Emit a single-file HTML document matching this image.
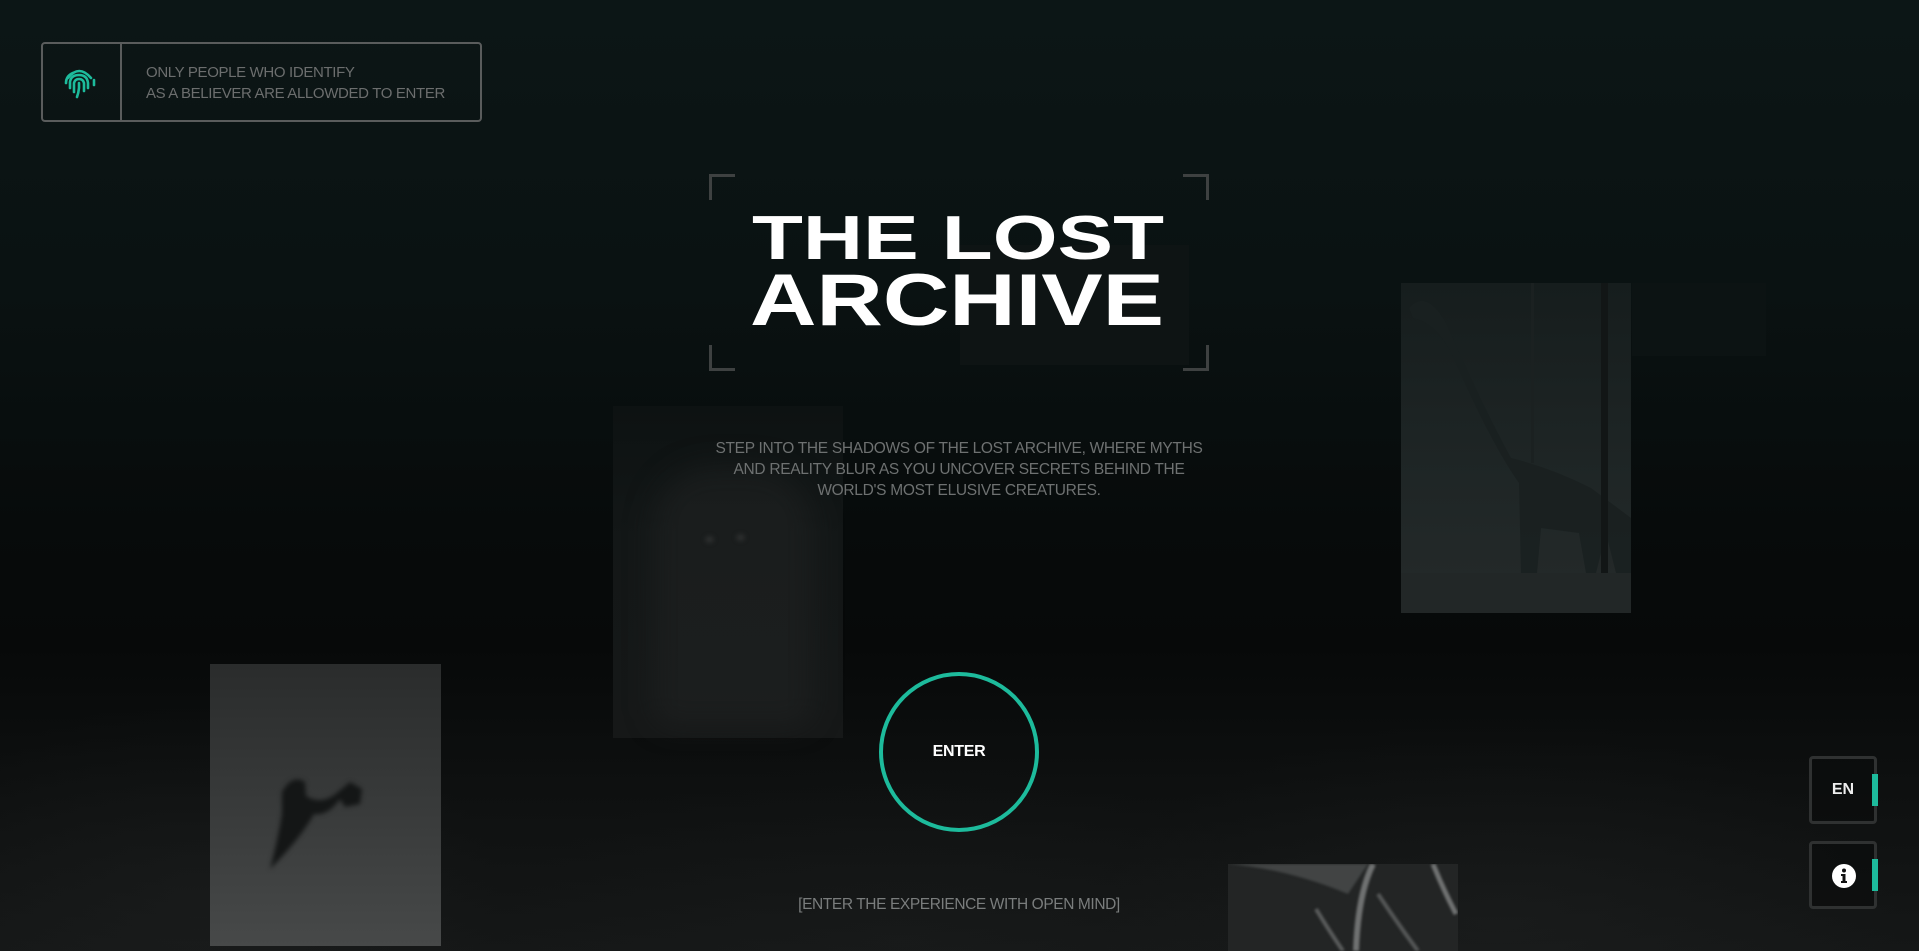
<!DOCTYPE html>
<html><head><meta charset="utf-8"><style>
*{margin:0;padding:0;box-sizing:border-box}
html,body{width:1919px;height:951px;overflow:hidden}
body{position:relative;font-family:"Liberation Sans",sans-serif;
background:linear-gradient(180deg,#0c1616 0%,#0a1212 30%,#070b0b 55%,#070909 68%,#0f1111 85%,#151717 100%);}
.abs{position:absolute}
.forest{left:0;top:600px;width:1919px;height:351px;
background:
radial-gradient(ellipse 300px 200px at 200px 300px,rgba(40,42,42,.25),transparent),
radial-gradient(ellipse 400px 200px at 1500px 320px,rgba(40,42,42,.25),transparent),
radial-gradient(ellipse 400px 180px at 900px 340px,rgba(35,37,37,.2),transparent);}
.notice{left:41px;top:42px;width:441px;height:80px;border:2px solid #5a5c5c;border-radius:4px}
.notice .div{position:absolute;left:77px;top:0;bottom:0;border-left:2px solid #5a5c5c}
.notice .t{position:absolute;left:103px;top:18px;color:#6c6e6e;font-size:15px;line-height:21px;letter-spacing:-.35px}
.desc{left:660px;top:438px;width:598px;text-align:center;color:#6e7171;font-size:15.5px;line-height:21px;letter-spacing:-.3px}
.img{position:absolute}
.enter{left:879px;top:672px;width:160px;height:160px;border:4px solid #1dbb9c;border-radius:50%;
color:#fff;font-weight:bold;font-size:16px;display:flex;align-items:center;justify-content:center;letter-spacing:-.3px}
.sub{left:700px;top:896px;width:518px;text-align:center;color:#7a7d7d;font-size:15.5px;letter-spacing:-.4px}
.btn{left:1809px;width:68px;height:68px;border:3px solid #2f3131;border-radius:4px;background:rgba(10,12,12,.6)}
.bar{position:absolute;right:-4px;top:15px;width:6px;height:32px;background:#1dbb9c}
.corner{position:absolute;width:26px;height:26px;border-color:#3e4141;border-style:solid;border-width:0}
</style></head><body>
<div class="abs forest"></div>

<!-- faint images -->
<div class="img" style="left:960px;top:245px;width:229px;height:120px;background:#0e1414"></div>
<div class="img" style="left:1632px;top:283px;width:134px;height:73px;background:#0c1313"></div>
<div class="img" style="left:613px;top:406px;width:230px;height:332px;background:linear-gradient(180deg,#0d1212,#131717 40%,#161818);">
  <div class="abs" style="left:40px;top:60px;width:160px;height:260px;border-radius:60px 60px 20px 20px;background:rgba(34,36,36,.5);filter:blur(14px)"></div>
  <div class="abs" style="left:92px;top:130px;width:9px;height:7px;border-radius:50%;background:#2c2e2e;filter:blur(2px)"></div>
  <div class="abs" style="left:123px;top:128px;width:9px;height:7px;border-radius:50%;background:#2c2e2e;filter:blur(2px)"></div>
</div>
<div class="img" style="left:1401px;top:283px;width:230px;height:330px;background:linear-gradient(180deg,#161d1d,#1f2626 60%,#252a2a);overflow:hidden">
  <svg width="230" height="330" viewBox="0 0 230 330">
    <path d="M8 25 Q25 5 45 40 Q80 120 110 175 Q150 185 190 205 L230 235 L230 290 L215 290 L205 250 L195 290 L185 290 L178 250 L140 245 L136 290 L120 290 L118 200 Q90 160 55 80 Q38 40 12 35 Z" fill="#1a2020" opacity=".9"/>
    <rect x="200" y="0" width="7" height="300" fill="#121616"/>
    <rect x="130" y="0" width="3" height="180" fill="#1b2121"/>
    <rect x="0" y="290" width="230" height="40" fill="#222727"/>
  </svg>
</div>
<div class="img" style="left:210px;top:664px;width:231px;height:282px;background:linear-gradient(180deg,#2a2c2c,#3b3d3d 60%,#474949);overflow:hidden">
  <svg width="231" height="282" viewBox="0 0 231 282" style="filter:blur(2.5px)">
    <path d="M72 128 Q82 110 95 118 L96 132 Q112 142 128 128 L140 118 L152 125 L150 140 L135 143 L130 135 Q118 152 104 150 Q90 175 60 205 Q68 175 72 150 Z" fill="#141616"/>
  </svg>
</div>
<div class="img" style="left:1228px;top:864px;width:230px;height:87px;background:#232525;overflow:hidden">
  <svg width="230" height="87" viewBox="0 0 230 87" style="filter:blur(1.2px)">
    <path d="M0 0 Q60 5 120 30 L140 0 H0 Z" fill="#4a4c4c" opacity=".8"/>
    <path d="M145 0 Q130 30 128 87" stroke="#707272" stroke-width="6" fill="none"/>
    <path d="M88 45 Q100 65 115 87" stroke="#5a5c5c" stroke-width="4" fill="none"/>
    <path d="M150 30 Q170 60 190 87" stroke="#555757" stroke-width="4" fill="none"/>
    <path d="M205 0 Q215 25 228 50" stroke="#707272" stroke-width="5" fill="none"/>
  </svg>
</div>

<!-- notice -->
<div class="abs notice">
  <div class="div"></div>
  <svg class="abs" style="left:20px;top:22px" width="34" height="34" viewBox="0 0 34 34" fill="none" stroke="#1dbb9c" stroke-width="2.6" stroke-linecap="round">
    <path d="M5 12 Q16 -2 28 12"/>
    <path d="M3 17 Q3 10 10 7"/>
    <path d="M31 14 L31 19"/>
    <path d="M7 22 L7 16 Q8 9 16 9 Q24 9 25 17 L25 22"/>
    <path d="M11 26 L11 17 Q12 13 16 13 Q20 13 21 17 L21 25"/>
    <path d="M16 17 L16 22 Q15.5 27 14 31"/>
  </svg>
  <div class="t">ONLY PEOPLE WHO IDENTIFY<br>AS A BELIEVER ARE ALLOWDED TO ENTER</div>
</div>

<!-- title -->
<div class="corner" style="left:709px;top:174px;border-left-width:3px;border-top-width:3px"></div>
<div class="corner" style="left:1183px;top:174px;border-right-width:3px;border-top-width:3px"></div>
<div class="corner" style="left:709px;top:345px;border-left-width:3px;border-bottom-width:3px"></div>
<div class="corner" style="left:1183px;top:345px;border-right-width:3px;border-bottom-width:3px"></div>
<svg class="abs" style="left:740px;top:200px" width="440" height="140" viewBox="0 0 440 140">
  <text x="12" y="59" font-family="Liberation Sans" font-weight="bold" font-size="62" fill="#fff" textLength="412" lengthAdjust="spacingAndGlyphs">THE LOST</text>
  <text x="10" y="125" font-family="Liberation Sans" font-weight="bold" font-size="73" fill="#fff" textLength="414" lengthAdjust="spacingAndGlyphs">ARCHIVE</text>
</svg>

<div class="abs desc">STEP INTO THE SHADOWS OF THE LOST ARCHIVE, WHERE MYTHS<br>AND REALITY BLUR AS YOU UNCOVER SECRETS BEHIND THE<br>WORLD'S MOST ELUSIVE CREATURES.</div>

<div class="abs enter">ENTER</div>
<div class="abs sub">[ENTER THE EXPERIENCE WITH OPEN MIND]</div>

<div class="abs btn" style="top:756px"><div class="bar"></div>
  <div style="position:absolute;inset:0;display:flex;align-items:center;justify-content:center;color:#eee;font-weight:bold;font-size:16px">EN</div></div>
<div class="abs btn" style="top:841px"><div class="bar"></div>
  <svg class="abs" style="left:20px;top:20px" width="24" height="24" viewBox="0 0 24 24">
    <circle cx="12" cy="12" r="12" fill="#fff"/>
    <circle cx="12" cy="6.5" r="2" fill="#111"/>
    <path d="M9 10 H13.5 V17 H15 V19 H9 V17 H10.5 V12 H9 Z" fill="#111"/>
  </svg>
</div>
</body></html>
